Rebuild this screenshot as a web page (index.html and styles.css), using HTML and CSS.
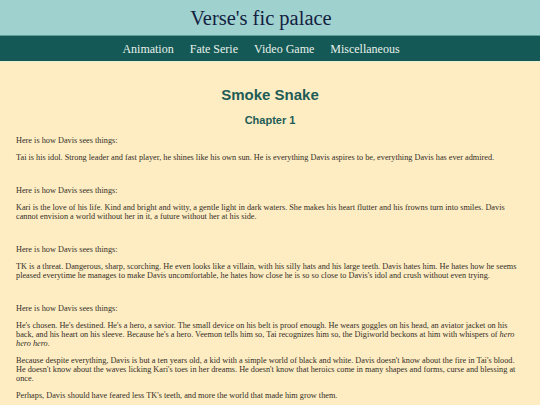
FILE: index.html
```html
<!DOCTYPE html>
<html lang="en">
<head>
<meta charset="utf-8">
<title>Verse's fic palace</title>
<link rel="stylesheet" href="styles.css">
</head>
<body>
<header class="site-header">
  <h1 class="site-title">Verse's fic palace</h1>
</header>
<nav class="site-nav">
  <a href="#">Animation</a>
  <a href="#">Fate Serie</a>
  <a href="#">Video Game</a>
  <a href="#">Miscellaneous</a>
</nav>
<main class="content">
  <h2 class="story-title">Smoke Snake</h2>
  <h3 class="chapter-title">Chapter 1</h3>
  <section class="part">
    <p>Here is how Davis sees things:</p>
    <p>Tai is his idol. Strong leader and fast player, he shines like his own sun. He is everything Davis aspires to be, everything Davis has ever admired.</p>
  </section>
  <section class="part">
    <p>Here is how Davis sees things:</p>
    <p>Kari is the love of his life. Kind and bright and witty, a gentle light in dark waters. She makes his heart flutter and his frowns turn into smiles. Davis cannot envision a world without her in it, a future without her at his side.</p>
  </section>
  <section class="part">
    <p>Here is how Davis sees things:</p>
    <p>TK is a threat. Dangerous, sharp, scorching. He even looks like a villain, with his silly hats and his large teeth. Davis hates him. He hates how he seems pleased everytime he manages to make Davis uncomfortable, he hates how close he is so so close to Davis's idol and crush without even trying.</p>
  </section>
  <section class="part">
    <p>Here is how Davis sees things:</p>
    <p>He's chosen. He's destined. He's a hero, a savior. The small device on his belt is proof enough. He wears goggles on his head, an aviator jacket on his back, and his heart on his sleeve. Because he's a hero. Veemon tells him so, Tai recognizes him so, the Digiworld beckons at him with whispers of <em>hero hero hero</em>.</p>
    <p>Because despite everything, Davis is but a ten years old, a kid with a simple world of black and white. Davis doesn't know about the fire in Tai's blood. He doesn't know about the waves licking Kari's toes in her dreams. He doesn't know that heroics come in many shapes and forms, curse and blessing at once.</p>
    <p>Perhaps, Davis should have feared less TK's teeth, and more the world that made him grow them.</p>
  </section>
</main>
</body>
</html>
```
FILE: styles.css
```css
html, body {
  margin: 0;
  padding: 0;
}
body {
  background: #feedc3;
  font-family: "Liberation Serif", "Times New Roman", serif;
  color: #332e26;
}
.site-header {
  background: #9fd1cf;
  height: 35px;
  display: flex;
  align-items: center;
  justify-content: center;
  padding-right: 18px;
  border-bottom: 1px solid #5f9f9c;
}
.site-title {
  margin: 0;
  font-size: 20.5px;
  font-weight: normal;
  line-height: 24px;
  color: #13213f;
}
.site-nav {
  background: #145955;
  height: 25px;
  display: flex;
  align-items: center;
  justify-content: center;
  gap: 16px;
  padding-right: 18px;
  border-bottom: 1px solid #e9efd3;
}
.site-nav a {
  color: #e8f1ec;
  text-decoration: none;
  font-size: 12px;
  line-height: 14px;
}
.content {
  padding: 24px 16px 20px;
}
.story-title {
  margin: 0 0 11px;
  text-align: center;
  font-family: "Liberation Sans", Arial, sans-serif;
  font-size: 15px;
  line-height: 17px;
  font-weight: bold;
  color: #1d5c56;
}
.chapter-title {
  margin: 0 0 9px;
  text-align: center;
  font-family: "Liberation Sans", Arial, sans-serif;
  font-size: 11px;
  line-height: 13px;
  font-weight: bold;
  color: #1d5c56;
}
.part {
  margin-top: 24px;
}
.chapter-title + .part {
  margin-top: 0;
}
.part p {
  margin: 8px 0;
  font-size: 8.25px;
  line-height: 9px;
}
.chapter-title + .part p:first-child {
  margin-top: 0;
}
```
